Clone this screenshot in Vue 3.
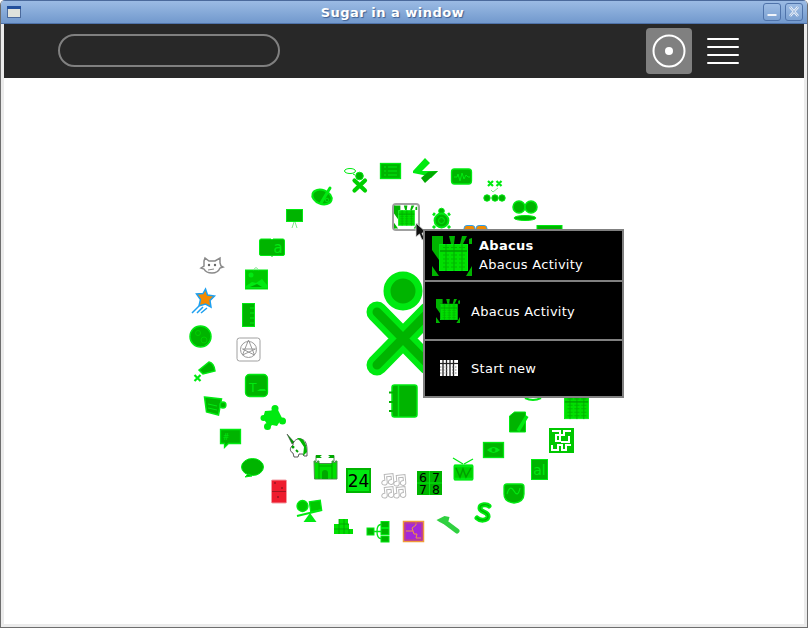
<script setup>
const titleText = 'Sugar in a window'
</script>

<template>
  <div class="window">
    <header class="titlebar">
      <svg class="menu-btn" width="14" height="12" viewBox="0 0 14 12">
        <rect x="0.5" y="0.5" width="13" height="11" fill="#dfe2dc" stroke="#4b6a9c" />
        <rect x="0" y="0" width="14" height="3" fill="#23509c" />
      </svg>
      <span class="title">{{ titleText }}</span>
      <div class="win-btns">
        <span class="win-btn">
          <svg width="16" height="16" viewBox="0 0 16 16"><rect x="3.500" y="10" width="9" height="2" fill="#f0f4fa" /></svg>
        </span>
        <span class="win-btn">
          <svg width="16" height="16" viewBox="0 0 16 16"><path d="M4 3l8 9M12 3l-8 9" stroke="#f0f4fa" stroke-width="2.600" fill="none" /><path d="M4 3l8 9M12 3l-8 9" stroke="#7ea2d2" stroke-width=".8" fill="none" /></svg>
        </span>
      </div>
    </header>

    <div class="toolbar">
      <div class="search"></div>
      <div class="toolbar-right">
        <span class="view-btn">
          <svg width="34" height="34" viewBox="0 0 34 34">
            <circle cx="17" cy="17" r="15.500" fill="none" stroke="#fff" stroke-width="2" />
            <circle cx="17" cy="17" r="4" fill="#fff" />
          </svg>
        </span>
        <span class="list-btn">
          <i></i><i></i><i></i><i></i>
        </span>
      </div>
    </div>

    <main class="canvas">
      <svg class="ring" width="800" height="546" viewBox="4 78 800 546">
        <defs>
          <g id="abacus-body">
            <rect x="7.500" y="8.500" width="28" height="26" fill="#00e000" stroke="#00ea11" />
            <path d="M14 8v27M22 8v27M30 8v27" stroke="#00a800" stroke-width="1" />
            <path d="M8 15h27" stroke="#00a000" stroke-width="1.600" />
            <path d="M11 11.500h6M19 11.500h6M27 11.500h6M11 19h6M19 19h6M27 19h6M11 23h6M19 23h6M27 23h6M11 27h6M19 27h6M27 27h6M11 31h6M19 31h6M27 31h6" stroke="#00b800" stroke-width="1.200" />
          </g>
          <g id="abacus-full">
            <path d="M0 0h11v8h-4v16l-7-10zM17 0h6l-1 8h-3zM30 0h5l-4 8h-3zM0 30l7 10h-7zM40 30v10h-6zM37 3l3-1v6h-3z" fill="#00b400" />
            <use href="#abacus-body" />
          </g>
          <path id="note" d="M1 1h8v7.500a2.500 2.200 0 1 1-2-2.200v-3h-4v5.200a2.500 2.200 0 1 1-2-2.200z" fill="#fff" stroke="#b8b8b8" stroke-width=".9" />
        </defs>

        <!-- central XO -->
        <circle cx="403" cy="291" r="16" fill="#00b400" stroke="#00ea11" stroke-width="7" />
        <path d="M377 312L429 365M377 365L429 312" stroke="#00ea11" stroke-width="21" stroke-linecap="round" fill="none" />
        <path d="M377 312L429 365M377 365L429 312" stroke="#00b400" stroke-width="9" stroke-linecap="round" fill="none" />

        <!-- selected abacus -->
        <rect x="393" y="204" width="26" height="26" rx="3" fill="#fff" stroke="#a0a0a0" stroke-width="2" />
        <use href="#abacus-full" transform="translate(394 205.400) scale(.58)" />

        <!-- xo with bubble -->
        <ellipse cx="350" cy="171" rx="5.500" ry="2.500" fill="#fff" stroke="#00ea11" />
        <path d="M353 174l2 1" stroke="#00ea11" />
        <path d="M354.500 180.500l10.500 10M365 180.500l-10.500 10" stroke="#00d000" stroke-width="4.200" stroke-linecap="round" />
        <circle cx="359.500" cy="176" r="3.800" fill="#00b400" stroke="#00ea11" />

        <!-- list document -->
        <rect x="380.500" y="163.500" width="20" height="15" fill="#00b400" stroke="#00ea11" stroke-width="1.300" />
        <path d="M384 167h2M388 167h9M384 171h2M388 171h9M384 175h2M388 175h9" stroke="#00ea11" />

        <!-- bolt -->
        <path d="M425 158l5 5-8 8h16l-7 7-3-2-15-3v-2z" fill="#00ea11" />
        <path d="M438 171l-13 12-4-5 7-6z" fill="#00a800" />

        <!-- wave -->
        <rect x="451.500" y="169" width="20" height="15" rx="3" fill="#00b400" stroke="#00ea11" stroke-width="1.300" />
        <path d="M454 177h3l1-3 2 7 2-8 2 6 2-4 2 2h2" fill="none" stroke="#00ea11" />

        <!-- xx check dots -->
        <path d="M488 181l5 5M493 181l-5 5M496.500 181l5 5M501.500 181l-5 5" stroke="#00ea11" stroke-width="2.200" />
        <path d="M491 190l2 2 5-4" stroke="#7ee88a" fill="none" />
        <circle cx="487" cy="198" r="3.200" fill="#00b400" stroke="#00ea11" />
        <circle cx="495" cy="198" r="3.200" fill="#00b400" stroke="#00ea11" />
        <circle cx="502" cy="198" r="3.200" fill="#00b400" stroke="#00ea11" />

        <!-- eyes -->
        <circle cx="519" cy="207" r="6" fill="#00b400" stroke="#00ea11" stroke-width="1.500" />
        <circle cx="531" cy="207" r="6" fill="#00b400" stroke="#00ea11" stroke-width="1.500" />
        <ellipse cx="525" cy="218" rx="11" ry="2.500" fill="#00b400" stroke="#00ea11" />

        <!-- partial items above popup -->
        <rect x="537" y="225.500" width="25" height="12" fill="#00b400" stroke="#00ea11" />
        <rect x="464" y="225.500" width="11" height="10" rx="3" fill="#f28a00" stroke="#2aa0f0" />
        <rect x="476" y="225.500" width="11" height="10" rx="3" fill="#f28a00" stroke="#2aa0f0" />

        <!-- turtle -->
        <circle cx="441.500" cy="211" r="2.800" fill="#00b400" stroke="#00ea11" />
        <circle cx="441.500" cy="220.500" r="7" fill="#00b400" stroke="#00ea11" stroke-width="1.800" />
        <circle cx="441.500" cy="220.500" r="3" fill="none" stroke="#00ea11" />
        <path d="M435 215l-2-1.500M448 215l2-1.500M435 226l-2 2M448 226l2 2" stroke="#00ea11" stroke-width="3" />

        <!-- palette -->
        <ellipse cx="322" cy="197" rx="10" ry="7" transform="rotate(20 322 197)" fill="#00b400" stroke="#00ea11" stroke-width="2" />
        <path d="M321 203l9-15" stroke="#00ea11" stroke-width="3" stroke-linecap="round" />
        <circle cx="327" cy="200" r="1.800" fill="none" stroke="#00ea11" />

        <!-- easel -->
        <rect x="286.500" y="209.500" width="16" height="12" fill="#00b400" stroke="#00ea11" />
        <path d="M294 222l-2 6M295 222l2 6" stroke="#7ee88a" />

        <!-- book -->
        <path d="M261 239h10l1 1 1-1h10q1.500 0 1.500 2v13q0 1.500-1.500 1.500h-10l-1 1-1-1h-10q-1.500 0-1.500-1.500v-13q0-2 1.500-2z" fill="#00b400" stroke="#00ea11" />
        <text x="278" y="253" class="glyph" font-size="15" text-anchor="middle" fill="#00ea11">a</text>

        <!-- cat -->
        <path d="M204 261l1-3 4 3h6l5-3 0 5 1 3 2 1-3 1q-2 5-8 5-6 0-8-4l-3-1 3-2z" fill="#fff" stroke="#8a8a8a" stroke-width="1.500" />
        <circle cx="209" cy="265" r="1.200" fill="#666" />
        <circle cx="215" cy="265" r="1.200" fill="#666" />
        <path d="M208 270l6-1" stroke="#8a8a8a" />

        <!-- picture -->
        <rect x="245.500" y="270" width="22" height="19" fill="#00c800" stroke="#00ea11" />
        <path d="M253 270l3-2.500 3 2.500" fill="none" stroke="#7ee88a" />
        <circle cx="251" cy="275" r="2.500" fill="#00ea11" />
        <path d="M246 286l6-4 4 1 6-4 5 6v3h-21z" fill="#00ea11" />
        <path d="M250 287l7-3 5 3z" fill="#00a800" />

        <!-- star -->
        <path d="M205.500 289l2 6 7 1-4.500 4.500 1 6.500-5.500-3-6.500 2 1.500-6.500-4-5.500 6.500-.5z" fill="#f58a00" stroke="#1ea0f0" stroke-width="1.500" />
        <path d="M199 306l-7 7M203 307l-6 6M207 308l-6 5" stroke="#1ea0f0" stroke-width="1.500" />

        <!-- ruler -->
        <rect x="242.500" y="303.500" width="12" height="23" fill="#00b400" stroke="#00ea11" />
        <path d="M250 308h4M250 313h4M250 318h4M250 323h4" stroke="#00ea11" />

        <!-- green circle -->
        <circle cx="200.500" cy="336.500" r="10.500" fill="#00b400" stroke="#00ea11" stroke-width="1.500" />
        <circle cx="198" cy="333" r="2.500" fill="none" stroke="#00d000" />
        <circle cx="204" cy="340" r="3" fill="none" stroke="#00d000" />

        <!-- gray box -->
        <rect x="237" y="338" width="23" height="23" rx="2.500" fill="#fff" stroke="#a0a0a0" />
        <circle cx="248.500" cy="349.500" r="8" fill="none" stroke="#999" />
        <path d="M248.500 340l6 15-12-6h13l-13 6z" fill="none" stroke="#999" />

        <!-- megaphone -->
        <path d="M199 370l10-8q5 1 6 9l-12 3z" fill="#00b400" stroke="#00ea11" stroke-width="1.500" />
        <path d="M194.500 375l6 6M200.500 375l-6 6" stroke="#00ea11" stroke-width="2.200" />

        <!-- T car box -->
        <rect x="245.500" y="374.500" width="22" height="22" rx="4" fill="#00b400" stroke="#00ea11" stroke-width="1.300" />
        <text x="253" y="392" class="glyph" font-size="12" text-anchor="middle" fill="#00ea11">T</text>
        <path d="M257 391h9l-1-2h-5z" fill="#00ea11" />

        <!-- money -->
        <path d="M204.500 397l17 2-3 16-12-3z" fill="#00b400" stroke="#00ea11" stroke-width="1.500" />
        <path d="M208 404l9 2M208 408l9 2" stroke="#00ea11" />
        <circle cx="223" cy="405" r="3" fill="#00b400" stroke="#00ea11" stroke-width="1.300" />

        <!-- puzzle -->
        <path d="M265 411l13-1 4 8-5 8-10-2-4-6z" fill="#00ea11" />
        <path d="M271 414l4-6M279 419l4 2M272 423l-4 4M266 418l-3 0" stroke="#00ea11" stroke-width="3" />
        <circle cx="275" cy="408.500" r="3.500" fill="#00ea11" />
        <circle cx="282.500" cy="421" r="3.500" fill="#00ea11" />
        <circle cx="267.500" cy="426.500" r="3.500" fill="#00ea11" />
        <circle cx="263.500" cy="418" r="3" fill="#00ea11" />

        <!-- chat # -->
        <path d="M220.500 429.500h20v14h-12l-4 4v-4h-4z" fill="#00b400" stroke="#00ea11" stroke-width="1.300" />
        <text x="226" y="440" class="glyph" font-size="8" text-anchor="middle" fill="#00ea11">#</text>

        <!-- unicorn -->
        <path d="M293 445c0-4 4-7 8-6 5 1 6 6 6 11v6h-3l-1-2h-4l-1 3h-4l-1-4c-3-1-4-5 0-8z" fill="#fff" stroke="#333" stroke-width=".8" />
        <path d="M287 434l7 8-2 2z" fill="#00a000" stroke="#333" stroke-width=".5" />
        <path d="M297 438c6-1 10 5 10 14l-4 4 1-9-4-6z" fill="#00b400" />
        <circle cx="293" cy="447" r="1.500" fill="#00a000" />
        <path d="M296 450l2 2" stroke="#00a000" stroke-width="2" />

        <!-- bubble -->
        <ellipse cx="252.500" cy="467" rx="11" ry="8.500" fill="#00b400" stroke="#00ea11" />
        <path d="M248 474l-3 3 7-1z" fill="#00b400" stroke="#00ea11" />

        <!-- castle -->
        <path d="M316 455.500v6M334 455.500v6" stroke="#4d8f4d" />
        <path d="M316 455h6l-2 1.500 2 1.500h-6zM334 455h-6l2 1.500-2 1.500h6z" fill="#00a800" />
        <path d="M314 461h1.500v1.500h2v-1.500h1.500v2.500h13v-2.500h1.500v1.500h2v-1.500h1.500v18h-22.500z" fill="#00e000" stroke="#4d8f4d" />
        <path d="M319 466h13M319 463v16M332 463v16" stroke="#00a800" />
        <path d="M322 479v-6q0-3 3-3t3 3v6z" fill="#00a800" />

        <!-- domino -->
        <rect x="271.500" y="480" width="15" height="23" rx="1" fill="#ee1c2e" stroke="#f39aa2" />
        <path d="M272 491.500h14" stroke="#a31621" />
        <circle cx="275" cy="483" r="1" fill="#9a1020" />
        <circle cx="282" cy="488" r="1" fill="#9a1020" />
        <circle cx="278" cy="497" r="1" fill="#9a1020" />

        <!-- 24 -->
        <rect x="347" y="469" width="23" height="23" fill="#00ea11" stroke="#00b400" stroke-width="2" />
        <text x="358.500" y="487" class="glyph" font-size="17" text-anchor="middle" fill="#000">24</text>

        <!-- music -->
        <use href="#note" transform="translate(383 473.500) rotate(-6) scale(1.100)" />
        <use href="#note" transform="translate(395 474.500) rotate(-6) scale(1.100)" />
        <use href="#note" transform="translate(383 486.500) rotate(-6) scale(1.100)" />
        <use href="#note" transform="translate(395 486.500) rotate(-6) scale(1.100)" />

        <!-- 6 7 8 -->
        <rect x="417" y="471" width="25" height="24" fill="#00b400" />
        <path d="M429.500 471v24M417 483h25" stroke="#00ea11" />
        <text x="423" y="481.500" class="glyph" font-size="12.500" text-anchor="middle" fill="#000">6</text>
        <text x="436" y="481.500" class="glyph" font-size="12.500" text-anchor="middle" fill="#000">7</text>
        <text x="423" y="494" class="glyph" font-size="12.500" text-anchor="middle" fill="#000">7</text>
        <text x="436" y="494" class="glyph" font-size="12.500" text-anchor="middle" fill="#000">8</text>

        <!-- seesaw -->
        <circle cx="302.500" cy="506" r="5.500" fill="#00c800" stroke="#00ea11" stroke-width="1.300" />
        <rect x="310" y="501" width="11" height="10" transform="rotate(-8 315 506)" fill="#00c800" stroke="#00ea11" stroke-width="1.300" />
        <path d="M297 516l25-6" stroke="#00ea11" stroke-width="2" />
        <path d="M310 513l6.500 9h-13z" fill="#00ea11" />

        <!-- blocks -->
        <path d="M339 519h9v5h1v5h4v5h-19v-10h5z" fill="#00e000" />
        <path d="M339 524h10M334 529h15M344 519v15M339 519v15M349 529v5" stroke="#00a000" stroke-width=".8" />

        <!-- tree -->
        <rect x="367" y="528" width="7" height="7" fill="#00b400" stroke="#00ea11" />
        <rect x="381" y="521.500" width="8" height="6" fill="#00b400" stroke="#00ea11" />
        <rect x="381" y="528.500" width="8" height="6" fill="#00b400" stroke="#00ea11" />
        <rect x="381" y="536" width="8" height="6" fill="#00b400" stroke="#00ea11" />
        <path d="M374 531.500h7M377 531.500q0-7 4-7M377 531.500q0 7 4 7" fill="none" stroke="#00ea11" stroke-width="1.300" />

        <!-- purple puzzle -->
        <rect x="403.500" y="521.500" width="20" height="20" fill="#a428d8" stroke="#f09a3a" stroke-width="1.500" />
        <path d="M406 531h7l-1-3 4-3v-3M413 531l1 3h3l-1 4h5" fill="none" stroke="#f09a3a" />
        <path d="M405 523h17v17h-17z" fill="none" stroke="#c9486a" />

        <!-- hammer -->
        <path d="M436.500 520l8-4 5 1-1 4-5 3-4-2z" fill="#30d040" />
        <path d="M445 522l12 9" stroke="#30d040" stroke-width="5" stroke-linecap="round" />

        <!-- S snake -->
        <path d="M489 506c-2-2-9-2-9 2 0 5 9 3 8 9-1 4-8 4-11 1" fill="none" stroke="#00ea11" stroke-width="5" stroke-linecap="round" />
        <path d="M489 506c-2-2-9-2-9 2 0 5 9 3 8 9-1 4-8 4-11 1" fill="none" stroke="#00b400" stroke-width="1.300" stroke-linecap="round" />

        <!-- sine shield -->
        <path d="M507 484h14q3 0 3 3v7q0 8-10 9-10-1-10-9v-7q0-3 3-3z" fill="#00b400" stroke="#00ea11" stroke-width="1.300" />
        <path d="M507 494q3-10 7-3t6-3" fill="none" stroke="#00ea11" stroke-width="1.200" />

        <!-- drum -->
        <rect x="454" y="465" width="19" height="15" rx="1" fill="#00d000" stroke="#00ea11" />
        <path d="M454 466h19M454 479h19" stroke="#00ea11" stroke-width="2.500" />
        <path d="M456 468l4 9 3-8 3 8 5-9" stroke="#00a000" stroke-width="1.500" fill="none" />
        <path d="M453 458l10 6M473 459l-9 5" stroke="#00ea11" stroke-width="1.300" />

        <!-- eye -->
        <rect x="483.500" y="442.500" width="20" height="15" fill="#00b400" stroke="#00ea11" stroke-width="1.300" />
        <path d="M487 450q6.500-6 13 0-6.500 6-13 0z" fill="#00ea11" />
        <circle cx="493.500" cy="450" r="2" fill="#00b400" />

        <!-- al -->
        <rect x="531.500" y="459.500" width="16" height="20" fill="#00b400" stroke="#00ea11" />
        <text x="539.500" y="475" class="glyph" font-size="14" text-anchor="middle" fill="#00ea11">al</text>

        <!-- note pencil -->
        <path d="M509.500 416l5-4h11v20h-16z" fill="#00b400" stroke="#00ea11" />
        <path d="M518 431l9-15" stroke="#00ea11" stroke-width="3.500" />

        <!-- maze -->
        <rect x="549" y="428" width="25" height="25" fill="#00c800" />
        <path d="M552 431h8v4h-4v6h4v-6h4v-4h7M552 445v5h6v-5h4v5h4v-5h5M569 436v6h-8" fill="none" stroke="#fff" stroke-width="2" />

        <!-- abacus lower -->
        <use href="#abacus-body" transform="translate(558 389) scale(.86)" />

        <!-- peeking under popup -->
        <path d="M525 398q8 4 16 0" fill="none" stroke="#00ea11" stroke-width="2" />

        <!-- notebook -->
        <rect x="392" y="385" width="25" height="32" rx="2.500" fill="#00b400" stroke="#00ea11" stroke-width="1.500" />
        <path d="M398.500 385v32" stroke="#00ea11" stroke-width="1.500" />
        <path d="M389 392.500h6M389 402h6M389 411h6" stroke="#00b400" stroke-width="2" />
      </svg>

      <!-- pointer -->
      <svg class="pointer" width="14" height="20" viewBox="0 0 14 20">
        <path d="M1 1l0 14 3.500-3 2.500 6 2.500-1-2.500-6 5 0z" fill="#111" stroke="#ddd" stroke-width=".8" />
      </svg>

      <!-- activity palette -->
      <aside class="palette">
        <div class="pal-head">
          <svg class="pal-icon" width="40" height="40" viewBox="0 0 40 40"><use href="#abacus-full" /></svg>
          <div class="pal-text">
            <strong>Abacus</strong>
            <span>Abacus Activity</span>
          </div>
        </div>
        <div class="pal-row">
          <svg class="row-icon" width="24" height="24" viewBox="0 0 40 40"><use href="#abacus-full" /></svg>
          <span>Abacus Activity</span>
        </div>
        <div class="pal-row pal-row-last">
          <svg class="row-icon" width="24" height="24" viewBox="0 0 24 24">
            <rect x="4" y="4" width="18" height="16" fill="#fff" />
            <path d="M7 4v16M10.500 4v16M14 4v16M17.500 4v16" stroke="#222" stroke-width="1.300" />
            <path d="M4 7.500h18" stroke="#222" stroke-width="1.200" />
            <path d="M4 11h18M4 14h18M4 17h18" stroke="#666" stroke-width=".8" stroke-dasharray="1.500 1.500" />
          </svg>
          <span>Start new</span>
        </div>
      </aside>
    </main>
  </div>
</template>

<style scoped>
.window {
  width: 808px;
  height: 628px;
  box-sizing: border-box;
  display: flex;
  flex-direction: column;
  background: #ebebeb;
  font-family: "DejaVu Sans", sans-serif;
  overflow: hidden;
  border-left: 1px solid #6e6e6e;
  border-right: 1px solid #6e6e6e;
  border-bottom: 1px solid #6e6e6e;
  border-top-left-radius: 5px;
  border-top-right-radius: 5px;
}
.titlebar {
  height: 24px;
  flex: none;
  position: relative;
  display: flex;
  align-items: center;
  justify-content: space-between;
  padding: 0 5px 0 7px;
  margin: 0 -1px;
  background: linear-gradient(#9bbbe4, #7299cd);
  border-top: 1px solid #4b6a9c;
  border-bottom: 1px solid #4f73aa;
  box-sizing: border-box;
}
.menu-btn { display: block; }
.title {
  position: absolute;
  left: 0;
  right: 23px;
  text-align: center;
  color: #fff;
  font-size: 13px;
  font-weight: 700;
  letter-spacing: 0.5px;
  text-shadow: 1px 1px 1px #3f5f90;
}
.win-btns { display: flex; gap: 4px; }
.win-btn {
  width: 18px;
  height: 18px;
  box-sizing: border-box;
  border: 1px solid #4f73aa;
  border-radius: 3px;
  display: flex;
  align-items: center;
  justify-content: center;
  background: linear-gradient(#9dbce4, #7da2d2);
}
.toolbar {
  height: 54px;
  flex: none;
  margin: 0 3px;
  background: #282828;
  display: flex;
  align-items: center;
  justify-content: space-between;
  padding-left: 54px;
}
.search {
  width: 222px;
  height: 33px;
  margin-top: -2px;
  box-sizing: border-box;
  border: 2px solid #808080;
  border-radius: 17px;
}
.toolbar-right {
  display: flex;
  align-items: center;
  margin-right: 65px;
  gap: 15px;
}
.view-btn {
  width: 46px;
  height: 46px;
  border-radius: 4px;
  background: #808080;
  display: flex;
  align-items: center;
  justify-content: center;
}
.list-btn {
  width: 32px;
  display: flex;
  flex-direction: column;
  gap: 6px;
  margin-top: -1px;
}
.list-btn i {
  display: block;
  height: 2px;
  background: #fff;
  border-radius: 1px;
}
.canvas {
  flex: 1;
  position: relative;
  margin: 0 3px 3px;
  background: #fff;
}
.ring { display: block; }
.glyph { font-family: "DejaVu Sans", sans-serif; }
.pointer {
  position: absolute;
  left: 411px;
  top: 144px;
}
.palette {
  position: absolute;
  left: 419px;
  top: 151px;
  width: 201px;
  height: 169px;
  box-sizing: border-box;
  background: #000;
  border: 2px solid #808080;
  color: #fff;
  font-size: 13px;
  letter-spacing: 0.27px;
  display: flex;
  flex-direction: column;
}
.pal-head {
  height: 51px;
  flex: none;
  box-sizing: border-box;
  display: flex;
  align-items: center;
  gap: 7px;
  padding-left: 7px;
  border-bottom: 2px solid #808080;
}
.pal-icon { display: block; }
.pal-text {
  display: flex;
  flex-direction: column;
  line-height: 19px;
  margin-top: -2px;
}
.pal-row {
  height: 57px;
  flex: none;
  box-sizing: border-box;
  display: flex;
  align-items: center;
  gap: 11px;
  padding: 1px 0 0 11px;
}
.pal-row-last {
  flex: 1;
  height: auto;
  border-top: 2px solid #808080;
  padding: 0 0 1px 11px;
}
.row-icon { display: block; }
</style>

<style>
html, body { margin: 0; background: #fff; }
</style>
